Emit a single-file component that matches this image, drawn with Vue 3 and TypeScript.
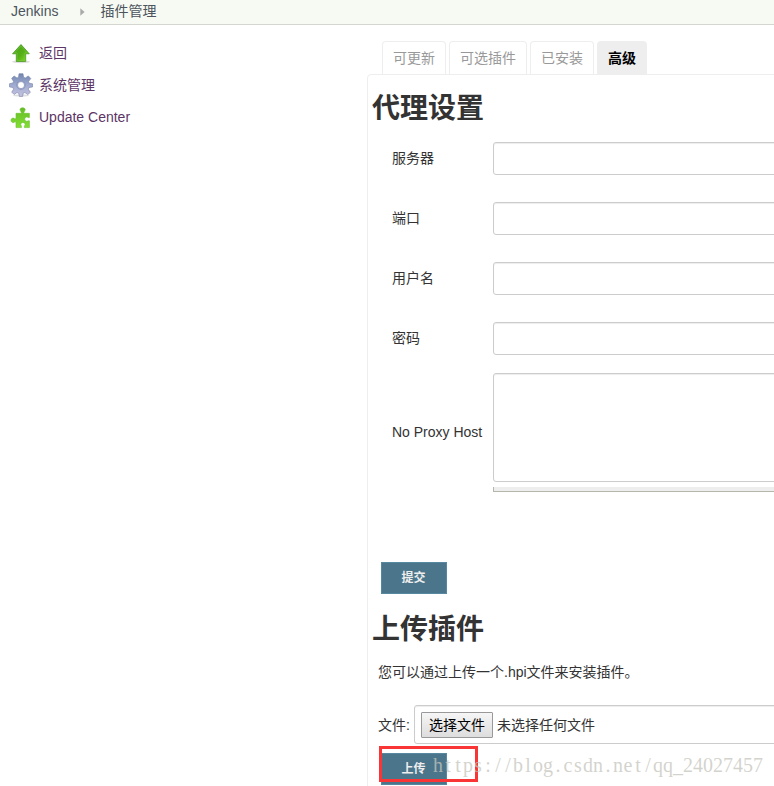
<script setup lang="ts">
interface Tab {
  label: string
  width: number
  active?: boolean
}

const tabs: Tab[] = [
  { label: '可更新', width: 64 },
  { label: '可选插件', width: 78 },
  { label: '已安装', width: 64 },
  { label: '高级', width: 50, active: true },
]

const fields: string[] = ['服务器', '端口', '用户名', '密码']

const watermark = 'https://blog.csdn.net/qq_24027457'
// Each character is centred in a 10px cell
const watermarkX = Array.from(watermark, (_, i) => i * 10 + 5).join(' ')
</script>

<template>
  <div class="page">
    <nav class="breadcrumb">
      <a>Jenkins</a>
      <svg class="crumb-arrow" width="5" height="8" viewBox="0 0 5 8"><path d="M0.3 0.2L4.6 4L0.3 7.8Z" fill="#aaa" /></svg>
      <a>插件管理</a>
    </nav>

    <div class="columns">
      <aside class="side">
        <a class="task">
          <svg width="24" height="24" viewBox="0 0 24 24">
            <defs>
              <linearGradient id="arrow" x1="0" y1="0" x2="1" y2="1">
                <stop offset="0" stop-color="#48a51c" />
                <stop offset=".55" stop-color="#55af16" />
                <stop offset="1" stop-color="#8be329" />
              </linearGradient>
            </defs>
            <ellipse cx="12" cy="20.8" rx="9" ry="1.5" fill="#dedede" />
            <path d="M12 3.5L20.3 12.8H16.7V20.5H7.3V12.8H3.5Z" fill="url(#arrow)" stroke="#419419" stroke-width=".7" />
            <path d="M12 5L18.2 11.9H15.8V19.6H8.2V11.9H5.6Z" fill="none" stroke="#7ccb40" stroke-width=".5" />
          </svg>
          <span>返回</span>
        </a>
        <a class="task">
          <svg width="24" height="24" viewBox="0 0 24 24">
            <defs>
              <linearGradient id="gear" x1="0" y1="0" x2="0" y2="1">
                <stop offset="0" stop-color="#7086b0" />
                <stop offset=".5" stop-color="#a0abd0" />
                <stop offset="1" stop-color="#c7c3df" />
              </linearGradient>
            </defs>
            <ellipse cx="12" cy="22.5" rx="8" ry="1.2" fill="#dedede" />
            <path
              d="M10 .7H14L14.6 4.2L16.3 5L19.3 2.9L21.8 5.6L19.5 8.5L20.1 10.2L23.5 10.8V14L20.1 14.5L19.3 16.2L21.4 19.3L18.8 21.6L15.9 19.5L14.2 20.1L13.6 23.4H10.4L9.7 20.1L8 19.5L5.1 21.5L2.7 19.1L4.6 16.2L3.9 14.5L.5 13.9V10.7L3.9 10L4.6 8.4L2.6 5.4L5.1 3L8 5L9.5 4.2ZM12 8.6A3.5 3.5 0 1 0 12 15.6A3.5 3.5 0 1 0 12 8.6Z"
              fill="url(#gear)" fill-rule="evenodd" stroke="#7781a9" stroke-width=".6"
            />
            <circle cx="12" cy="12.1" r="4.4" fill="none" stroke="#8995bc" stroke-width=".8" />
          </svg>
          <span>系统管理</span>
        </a>
        <a class="task">
          <svg width="24" height="24" viewBox="0 0 24 24">
            <defs>
              <linearGradient id="puzzle" x1="0" y1="0" x2="0" y2="1">
                <stop offset="0" stop-color="#64bd27" />
                <stop offset="1" stop-color="#83df32" />
              </linearGradient>
            </defs>
            <path
              d="M7 8.3H12.3C12.8 7.2 11 6 11 4.2A2.8 2.3 0 0 1 16.2 4.2C16.2 6 14.4 7.2 15 8.3H20.4V12.6C19.4 13 18.4 11.8 17.3 12.1A2.1 2.1 0 0 0 17.3 16.2C18.4 16.5 19.5 15.3 20.4 15.8V22.6H15.4C14.8 21.2 16.3 20.4 16.2 19.1A2.3 2.1 0 0 0 11.7 19.1C11.7 20.4 13 21.2 12.4 22.6H7V17C5.8 16.3 5.1 17.9 3.8 17.6A2.3 2.3 0 0 1 3.8 13.1C5.1 12.9 5.8 14.4 7 13.6Z"
              fill="url(#puzzle)" stroke="#69c02d" stroke-width=".6"
            />
          </svg>
          <span>Update Center</span>
        </a>
      </aside>

      <main class="main">
        <div class="tabs">
          <div v-for="tab in tabs" :key="tab.label" class="tab" :class="{ active: tab.active }" :style="{ width: tab.width + 'px' }">
            {{ tab.label }}
          </div>
        </div>
        <section class="panel">
          <h1>代理设置</h1>
          <form class="proxy" @submit.prevent>
            <label v-for="field in fields" :key="field" class="row">
              <span class="label">{{ field }}</span>
              <input class="control" :type="field === '密码' ? 'password' : 'text'" />
            </label>
            <label class="row tall">
              <span class="label">No Proxy Host</span>
              <span class="area">
                <textarea class="control"></textarea>
                <span class="handle"></span>
              </span>
            </label>
            <button class="primary">提交</button>
          </form>

          <h1 class="second">上传插件</h1>
          <p class="hint">您可以通过上传一个.hpi文件来安装插件。</p>
          <div class="file-row">
            <span class="file-label">文件:</span>
            <div class="file-box">
              <button class="choose" type="button">选择文件</button>
              <span>未选择任何文件</span>
            </div>
          </div>
          <div class="upload">
            <button class="primary">上传</button>
            <div class="marker"></div>
          </div>
        </section>
      </main>
    </div>

    <svg class="watermark" width="332" height="30">
      <text :x="watermarkX" y="20">{{ watermark }}</text>
    </svg>
  </div>
</template>

<style>
body {
  overflow: hidden;
}
</style>

<style scoped>
.page {
  position: relative;
  width: 774px;
  height: 786px;
  overflow: hidden;
  background: #fff;
  color: #333;
  font: 14px/20px "Liberation Sans", "Noto Sans CJK SC", sans-serif;
}

.page * {
  box-sizing: border-box;
}

.breadcrumb {
  display: flex;
  align-items: center;
  height: 25px;
  padding: 0 0 2px 11px;
  background: #f6faf2;
  border-bottom: 1px solid #d3d7cf;
  color: #4d545d;
}

.crumb-arrow {
  margin: 1px 15px 0 22px;
}

.columns {
  display: flex;
}

.side {
  display: flex;
  flex-direction: column;
  width: 367px;
  flex: none;
  padding: 12px 0 0 9px;
}

.task {
  display: flex;
  align-items: center;
  gap: 6px;
  height: 32px;
  color: #5c3566;
}

.main {
  flex: none;
  width: 440px;
  padding-top: 16px;
}

.tabs {
  display: flex;
  gap: 3px;
  height: 33px;
  padding-left: 15px;
}

.tab {
  height: 33px;
  border: 1px solid #eee;
  border-bottom: 0;
  border-radius: 4px 4px 0 0;
  color: #999;
  line-height: 32px;
  text-align: center;
}

.tab.active {
  background: #eee;
  color: #000;
  font-weight: bold;
}

.panel {
  height: 720px;
  border: 1px solid #eee;
  border-radius: 4px 0 0 0;
  padding-left: 4px;
}

h1 {
  margin: 0;
  height: 52px;
  padding-top: 14px;
  font-size: 28px;
  line-height: 40px;
}

.row {
  display: flex;
  align-items: center;
  height: 60px;
  padding: 2px 0 0 20px;
}

.label {
  width: 101px;
  flex: none;
}

.control {
  display: block;
  width: 400px;
  height: 33px;
  border: 1px solid #ccc;
  border-radius: 3px;
  background: #fff;
  box-shadow: inset 0 1px 1px rgba(0, 0, 0, 0.075);
  resize: none;
}

.row.tall {
  height: 119px;
  margin-top: 6px;
  padding-top: 0;
}

.area {
  display: flex;
  flex-direction: column;
  gap: 5px;
}

.area .control {
  height: 109px;
}

.tall .label {
  padding-bottom: 1px;
}

.handle {
  display: block;
  height: 5px;
  background: #eee;
  border-left: 1px solid #b5b5ab;
  border-bottom: 1px solid #b5b5ab;
}

.primary {
  display: block;
  width: 66px;
  height: 32px;
  padding: 1px 1px 0 0;
  border: 1px solid #5788a1;
  background: #4b758b;
  color: #eee;
  font: bold 12px/29px "Liberation Sans", "Noto Sans CJK SC", sans-serif;
}

.proxy .primary {
  margin: 70px 0 0 9px;
}

.second {
  padding-top: 16px;
}

.hint {
  margin: 16px 0 0 6px;
}

.file-row {
  display: flex;
  align-items: center;
  margin: 23px 0 0 6px;
}

.file-label {
  width: 36px;
  flex: none;
}

.file-box {
  display: flex;
  align-items: center;
  gap: 4px;
  width: 400px;
  flex: none;
  height: 39px;
  padding-left: 6px;
  border: 1px solid #ccc;
  border-radius: 3px;
  box-shadow: inset 0 1px 1px rgba(0, 0, 0, 0.075);
}

.choose {
  width: 72px;
  height: 26px;
  padding: 0;
  border: 1px solid #999;
  border-radius: 1px;
  background: linear-gradient(#f6f6f6, #ddd);
  color: #000;
  font: inherit;
}

.upload {
  position: relative;
  margin: 9px 0 0 9px;
}

.marker {
  position: absolute;
  left: -2px;
  top: -7px;
  width: 99px;
  height: 36px;
  border: 3px solid #f93536;
}

.watermark {
  position: absolute;
  left: 433px;
  top: 752px;
}

.watermark text {
  fill: #c5c5bd;
  fill-opacity: 0.75;
  font: 20px "Liberation Serif", serif;
  text-anchor: middle;
}
</style>
